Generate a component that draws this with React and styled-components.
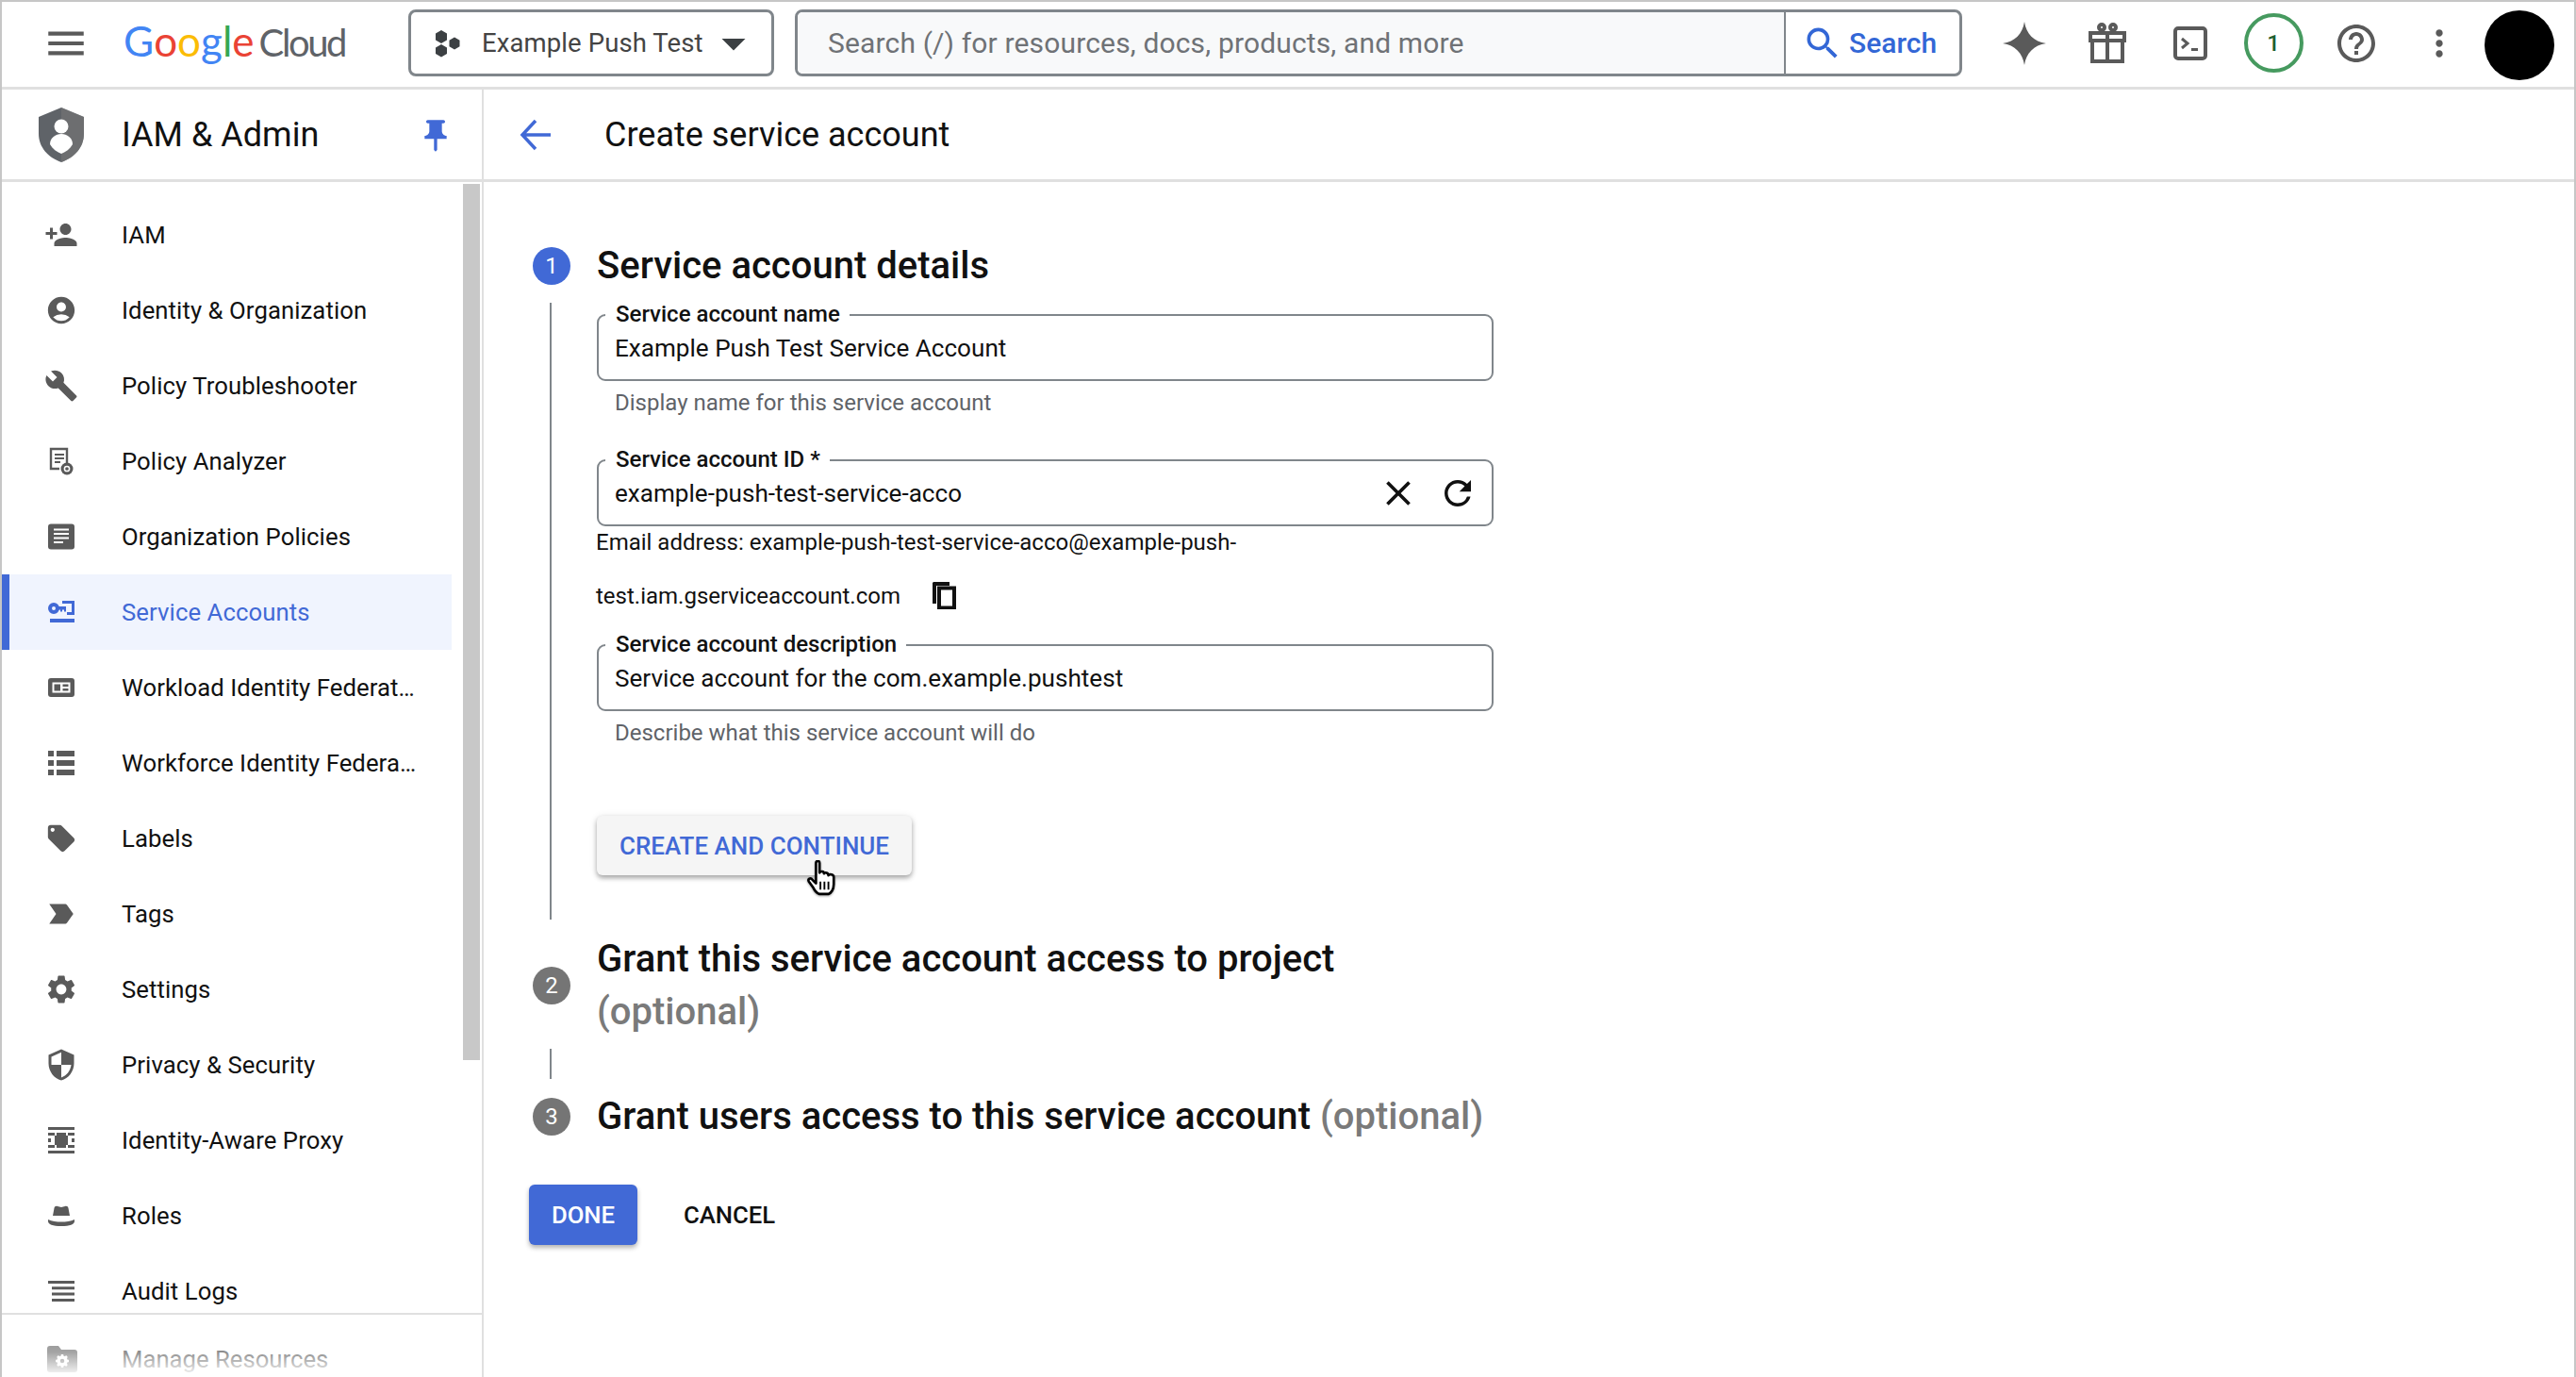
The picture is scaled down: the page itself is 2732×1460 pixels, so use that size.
import React from "react";
import styled, { createGlobalStyle } from "styled-components";
import {
  MdMenu, MdArrowDropDown, MdSearch, MdHelpOutline, MdMoreVert, MdPushPin,
  MdClose, MdRefresh, MdPersonAdd, MdAccountCircle, MdBuild, MdLocalOffer,
  MdLabelImportant, MdSettings, MdSecurity,
} from "react-icons/md";

const Global = createGlobalStyle`
  html, body { margin: 0; padding: 0; background: #fff; }
  body { font-family: Roboto, "Liberation Sans", sans-serif; color: #111; }
  #root { width: 2732px; height: 1460px; overflow: hidden; }
  * { box-sizing: border-box; }
`;

const Page = styled.div`
  width: 2732px; height: 1460px; overflow: hidden; display: flex; flex-direction: column;
  border: 2px solid #c6c6c6; border-bottom: none; background: #fff;
`;
const TopBar = styled.header`
  height: 93px; flex: none; display: flex; align-items: center; border-bottom: 3px solid #e0e0e0; padding-bottom: 3px;
`;
const MenuButton = styled.div`
  width: 129px; padding-left: 43px; flex: none; display: flex; align-items: center; color: #5a5a5a; font-size: 50px;
  svg { display: block; }
`;
const Logo = styled.div`
  width: 302px; flex: none; display: flex; align-items: baseline; font-family: Lato, sans-serif; font-size: 44px; letter-spacing: 0; color: #5f6368; padding-bottom: 6px;
`;
const LogoLetter = styled.span`color: ${(p) => p.$c};`;
const LogoWord = styled.span`font-size: 40px; margin-left: 5px; letter-spacing: -2.4px; color: #5f6368;`;
const ProjectPicker = styled.div`
  width: 388px; height: 71px; flex: none; display: flex; align-items: center; border: 3px solid #80868b; border-radius: 8px;
  padding-left: 24px; font-size: 27.5px; color: #444; margin-right: 22px;
`;
const ProjectName = styled.span`margin-left: 21px; white-space: nowrap; letter-spacing: .1px;`;
const ProjectCaret = styled.span`margin-left: 2px; display: flex; font-size: 60px; color: #3c4043;`;
const SearchBox = styled.div`
  width: 1238px; height: 71px; flex: none; display: flex; border: 3px solid #80868b; border-radius: 8px; overflow: hidden;
`;
const SearchInput = styled.div`
  flex: 1; background: #f8f9fa; padding-left: 32px; display: flex; align-items: center; font-size: 30px; letter-spacing: .15px; color: #6f7276; border-right: 2px solid #80868b;
`;
const SearchButton = styled.div`
  width: 184px; flex: none; display: flex; align-items: center; padding-left: 17px; gap: 6px; color: #3367d6; font-size: 30px; font-weight: 500; svg { font-size: 44px; }
`;
const IconRow = styled.div`margin-left: 22px; display: flex; align-items: center; flex: none;`;
const IconSlot = styled.div`
  width: 88px; display: flex; align-items: center; justify-content: center; color: #5a5a5a;
  svg { display: block; }
`;
const CountRing = styled.div`
  width: 63px; height: 63px; border-radius: 50%; border: 4px solid #469a5f; color: #1e5e2f; display: flex; align-items: center; justify-content: center; font-size: 24px; font-weight: 500;
`;
const Avatar = styled.div`width: 74px; height: 74px; flex: none; border-radius: 50%; background: #000; margin: 5px 0 0 4px;`;

const Body = styled.div`flex: 1; min-height: 0; display: flex;`;
const Sidebar = styled.aside`
  width: 511px; flex: none; border-right: 2.5px solid #e0e0e0; display: flex; flex-direction: column; position: relative; overflow: hidden;
`;
const SideHead = styled.div`
  height: 98px; flex: none; display: flex; align-items: center; border-bottom: 3px solid #e0e0e0; padding: 0 31px 0 39px;
`;
const SideTitle = styled.div`flex: 1; margin-left: 40px; font-size: 36px; color: #111; white-space: nowrap;`;
const PinIcon = styled.div`color: #4169d6; display: flex; font-size: 40px; margin: 2px -2px 0 0;`;
const NavWrap = styled.div`flex: 1; min-height: 0; position: relative; overflow: hidden;`;
const Nav = styled.nav`padding-top: 16px; width: 477px; display: flex; flex-direction: column;`;
const NavRow = styled.div`
  height: 80px; flex: none; display: flex; align-items: center;
  color: ${(p) => (p.$active ? "#4169d6" : "#111")};
  background: ${(p) => (p.$active ? "#f0f4fe" : "transparent")};
  border-left: 8px solid ${(p) => (p.$active ? "#4169d6" : "transparent")};
`;
const NavIcon = styled.span`
  width: 119px; padding-right: 9px; flex: none; display: flex; align-items: center; justify-content: center;
  color: ${(p) => (p.$active ? "#4169d6" : "#5a5a5a")};
  svg { display: block; }
`;
const NavText = styled.span`font-size: 25.7px; white-space: nowrap; letter-spacing: .08px;`;
const ScrollThumb = styled.div`
  position: absolute; top: 2px; left: 489px; width: 18px; height: 929px; background: #c8c8c8;
`;
const SideFoot = styled.div`
  position: absolute; left: 0; right: 0; bottom: 0; height: 68px; background: #fff; border-top: 2.500px solid #e0e0e0;
  display: flex; align-items: center; padding-top: 28px;
`;
const Fade = styled.div`position: absolute; inset: 0; background: linear-gradient(to bottom, rgba(255,255,255,.2), rgba(255,255,255,.45) 60%, #fff 100%);`;
const FootIcon = styled.span`width: 127px; padding-left: 48px; display: flex; color: #5a5a5a; svg { display: block; }`;
const FootText = styled.span`font-size: 25.7px; color: #333; white-space: nowrap;`;

const Main = styled.main`flex: 1; min-width: 0; display: flex; flex-direction: column;`;
const SubHead = styled.div`
  height: 98px; flex: none; display: flex; align-items: center; border-bottom: 3px solid #e0e0e0; padding-left: 38px;
`;
const BackIcon = styled.svg`width: 34px; height: 34px; margin-right: 56px; color: #4169d6;`;
const PageTitle = styled.h1`margin: 0; font-weight: 400; font-size: 36px; color: #111;`;
const Content = styled.div`padding: 61px 0 0 48px;`;
const StepHead = styled.div`
  display: flex; align-items: center; padding-left: 4px; margin-top: ${(p) => p.$mt || 0}px;
`;
const StepDot = styled.div`
  width: 40px; height: 40px; border-radius: 50%; flex: none; margin-right: 28px; display: flex; align-items: center; justify-content: center;
  color: #fff; font-size: 24px; background: ${(p) => (p.$on ? "#4169d6" : "#757575")};
`;
const StepTitle = styled.div`
  font-size: 40px; font-weight: 500; line-height: 56px; color: #111; width: ${(p) => p.$w || "auto"}; white-space: ${(p) => (p.$w ? "normal" : "nowrap")};
`;
const Optional = styled.span`color: #7a7a7a;`;
const StepBody = styled.div`
  margin-left: 22px; padding: 12px 0 47px 47px; border-left: 2px solid #80868b; margin-top: 11px; width: 1000px;
`;
const Rail = styled.div`margin-left: 22px; margin-top: 11px; width: 2px; height: 32px; background: #80868b;`;
const Field = styled.div`
  width: 951px; height: 71px; margin-left: 1px; border: 2.5px solid #80868b; border-radius: 9px; position: relative; display: flex; align-items: center; padding: 0 15px 0 17px;
  margin-top: ${(p) => p.$mt || 0}px;
`;
const FieldLabel = styled.label`
  position: absolute; left: 7px; top: -16px; background: #fff; padding: 0 10px 0 11px; font-size: 24px; font-weight: 500; line-height: 28px; color: #111; white-space: nowrap;
`;
const FieldValue = styled.span`flex: 1; font-size: 26.1px; color: #111; white-space: nowrap;`;
const FieldAction = styled.span`display: flex; color: #111; margin-left: ${(p) => p.$ml || 0}px;`;
const Hint = styled.div`
  padding-left: 20px; margin-top: 8px; height: 30px; line-height: 30px; font-size: 24px; color: #5f6368; margin-bottom: ${(p) => p.$mb || 0}px;
`;
const EmailLine = styled.div`
  display: flex; align-items: center; height: ${(p) => p.$h}px; margin-top: ${(p) => p.$mt || 0}px; font-size: 24px; color: #111; white-space: nowrap;
`;
const CopyIcon = styled.svg`display: block; width: 26px; height: 29px; margin-left: 33px; color: #111;`;
const RaisedButton = styled.button`
  display: block; width: 334px; height: 63px; margin: 73px 0 0 1px; border: 0; border-radius: 6px; background: #f5f5f5; color: #4169d6; font: 500 26px Roboto, sans-serif; position: relative; padding: 0;
  box-shadow: 0 3px 5px rgba(0,0,0,.3), 0 1px 8px rgba(0,0,0,.1);
`;
const CursorMark = styled.svg`position: absolute; left: 223px; top: 47px; width: 32px; height: 38px; filter: drop-shadow(0 1px 1px rgba(0,0,0,.35));`;
const Actions = styled.div`display: flex; align-items: center; margin-top: 44px;`;
const DoneButton = styled.button`
  width: 115px; height: 64px; border: 0; border-radius: 6px; background: #4169d6; color: #fff; font: 500 25.7px Roboto, sans-serif; padding: 0;
  box-shadow: 0 3px 5px rgba(0,0,0,.3);
`;
const CancelButton = styled.button`
  border: 0; background: none; color: #111; font: 500 25.7px Roboto, sans-serif; padding: 0; margin-left: 49px;
`;

const PolicyAnalyzer = () => (
  <svg width="28" height="30" viewBox="0 0 28 30" fill="none"><path d="M20 19V2H3v21h9" stroke="currentColor" strokeWidth="2.400" /><path d="M7 8h10M7 12h10M7 16h6" stroke="currentColor" strokeWidth="2" /><circle cx="20" cy="23" r="6.500" fill="currentColor" /><circle cx="20" cy="23" r="2.600" fill="none" stroke="#fff" strokeWidth="1.500" /></svg>
);
const OrgPolicy = () => (
  <svg width="28" height="28" viewBox="0 0 28 28"><rect width="28" height="27" y=".5" rx="3" fill="currentColor" /><path d="M6 6.500h16M6 11h16M6 15.500h16M6 20h10" stroke="#fff" strokeWidth="2" /></svg>
);
const ServiceKey = () => (
  <svg width="28" height="24" viewBox="0 0 28 24"><circle cx="6" cy="8" r="4" fill="none" stroke="currentColor" strokeWidth="4" /><path d="M10 6h9v5.500h-2V9.500h-2v2h-2v-2h-3z" fill="currentColor" /><path d="M15 0h13v15H20v-3h5V3H15zM2 19h26v4H2z" fill="currentColor" /></svg>
);
const Workload = () => (
  <svg width="28" height="20" viewBox="0 0 28 20"><rect width="28" height="20" rx="3" fill="currentColor" /><path d="M4.500 4.500h19v11h-19z" fill="#fff" /><path d="M6.500 6.500h6.500v7H6.500zM15.500 6.500h6v2.500h-6zM15.500 11h6v2.500h-6z" fill="currentColor" /></svg>
);
const WorkforceList = () => (
  <svg width="28" height="26" viewBox="0 0 28 26"><path d="M0 0h6v6H0zM9 0h19v6H9zM0 10h6v6H0zM9 10h19v6H9zM0 20h6v6H0zM9 20h19v6H9z" fill="currentColor" /></svg>
);
const Proxy = () => (
  <svg width="28" height="28" viewBox="0 0 28 28"><path d="M0 0h28v3H0zM0 25h28v3H0zM0 6h7v3H0zM21 6h7v3h-7zM0 19h7v3H0zM21 19h7v3h-7zM0 12h3v4H0zM25 12h3v4h-3zM9 6h10v3h2v10h-2v3H9v-3H7V9h2z" fill="currentColor" /></svg>
);
const Hat = () => (
  <svg width="28" height="22" viewBox="0 0 28 22"><path d="M5 11 6.500 3c.3-1.800 1.800-2.500 3.500-2l4 1 4-1c1.700-.5 3.200.2 3.500 2L23 11zM0 15c4 2 9 2.500 14 2.500S24 17 28 15v2c0 3-5 5-14 5S0 20 0 17z" fill="currentColor" /></svg>
);
const AuditLines = () => (
  <svg width="28" height="22" viewBox="0 0 28 22"><path d="M0 0h28v3H0zM4 6.300h24v3H4zM4 12.600h24v3H4zM4 19h24v3H4z" fill="currentColor" /></svg>
);
const FolderGear = () => (
  <svg width="32" height="28" viewBox="0 0 32 28"><path d="M0 3a3 3 0 0 1 3-3h9l3 4h14a3 3 0 0 1 3 3v18a3 3 0 0 1-3 3H3a3 3 0 0 1-3-3z" fill="currentColor" /><circle cx="16" cy="16" r="4" fill="none" stroke="#fff" strokeWidth="3.500" /><path d="M16 9v3M16 20v3M9 16h3M20 16h3M11 11l2 2M21 11l-2 2M11 21l2-2M21 21l-2-2" stroke="#fff" strokeWidth="2.500" /></svg>
);
const Hive = () => (
  <svg width="30" height="30" viewBox="0 0 30 30" fill="#3c4043"><path d="M8 1l6 3.500v7L8 15l-6-3.500v-7z" /><path d="M22 8.500l5.500 3.200v6.600L22 21.500l-5.500-3.200v-6.600z" /><path d="M8 16l6 3.500v6.500L8 29.500 2 26v-6.500z" /></svg>
);
const Spark = () => (
  <svg width="46" height="46" viewBox="0 0 46 46" fill="#5a5a5a"><path d="M23 0c2 13 10 21 23 23-13 2-21 10-23 23-2-13-10-21-23-23 13-2 21-10 23-23z" /></svg>
);
const Gift = () => (
  <svg width="40" height="43" viewBox="0 0 40 43" fill="none" stroke="#5a5a5a" strokeWidth="4"><path d="M4 19v22h32V19" /><rect x="2" y="11" width="36" height="8" /><path d="M20 11v30" /><circle cx="14" cy="5" r="3" /><circle cx="26" cy="5" r="3" /></svg>
);
const Terminal = () => (
  <svg width="36" height="36" viewBox="0 0 36 36"><rect x="2" y="2" width="32" height="32" rx="3" fill="none" stroke="#5a5a5a" strokeWidth="4" /><path d="M9 13l6 5-6 5" fill="none" stroke="#5a5a5a" strokeWidth="3" /><path d="M19 23h7v3h-7z" fill="#5a5a5a" /></svg>
);
const Shield = () => (
  <svg width="48" height="58" viewBox="0 0 48 58"><path d="M24 0 48 10v18c0 14-10 25-24 30C10 53 0 42 0 28V10z" fill="#5f6368" /><path d="M24 0 48 10v18c0 14-10 25-24 30z" fill="#777" opacity=".6" /><circle cx="24" cy="20" r="7.500" fill="#fff" /><path d="M12 39c0-7 6-11 12-11s12 4 12 11c-3 5-7 8-12 10-5-2-9-5-12-10z" fill="#fff" /></svg>
);
const Hand = () => (
  <CursorMark viewBox="0 0 34 40"><path d="M10 3c0-3 4-3 4 0v11c1-2 5-2 5 1 1-2 5-1 5 2 1-2 6-1 6 2v8c0 6-3 10-6 11H14c-3-1-5-3-7-7l-5-7c-2-3 2-5 4-2l4 4z" fill="#fff" stroke="#000" strokeWidth="2.800" strokeLinejoin="round" /><path d="M15 24v9M19.500 24v9M24 24v9" stroke="#000" strokeWidth="2" /></CursorMark>
);

const navItems = [
  ["IAM", <MdPersonAdd size={36} />],
  ["Identity & Organization", <MdAccountCircle size={34} />],
  ["Policy Troubleshooter", <MdBuild size={36} />],
  ["Policy Analyzer", <PolicyAnalyzer />],
  ["Organization Policies", <OrgPolicy />],
  ["Service Accounts", <ServiceKey />, true],
  ["Workload Identity Federat…", <Workload />],
  ["Workforce Identity Federa…", <WorkforceList />],
  ["Labels", <MdLocalOffer size={34} />],
  ["Tags", <MdLabelImportant size={36} />],
  ["Settings", <MdSettings size={36} />],
  ["Privacy & Security", <MdSecurity size={36} />],
  ["Identity-Aware Proxy", <Proxy />],
  ["Roles", <Hat />],
  ["Audit Logs", <AuditLines />],
];

const googleLetters = [["G", "#4285f4"], ["o", "#ea4335"], ["o", "#fbbc05"], ["g", "#4285f4"], ["l", "#34a853"], ["e", "#ea4335"]];

export default function App() {
  return (
    <Page>
      <Global />
      <TopBar>
        <MenuButton><MdMenu /></MenuButton>
        <Logo>
          {googleLetters.map(([l, c], i) => <LogoLetter key={i} $c={c}>{l}</LogoLetter>)}
          <LogoWord>Cloud</LogoWord>
        </Logo>
        <ProjectPicker>
          <Hive />
          <ProjectName>Example Push Test</ProjectName>
          <ProjectCaret><MdArrowDropDown /></ProjectCaret>
        </ProjectPicker>
        <SearchBox>
          <SearchInput>Search (/) for resources, docs, products, and more</SearchInput>
          <SearchButton><MdSearch />Search</SearchButton>
        </SearchBox>
        <IconRow>
          <IconSlot><Spark /></IconSlot>
          <IconSlot><Gift /></IconSlot>
          <IconSlot><Terminal /></IconSlot>
          <IconSlot><CountRing>1</CountRing></IconSlot>
          <IconSlot><MdHelpOutline size={48} /></IconSlot>
          <IconSlot><MdMoreVert size={44} /></IconSlot>
        </IconRow>
        <Avatar />
      </TopBar>
      <Body>
        <Sidebar>
          <SideHead>
            <Shield />
            <SideTitle>IAM &amp; Admin</SideTitle>
            <PinIcon><MdPushPin /></PinIcon>
          </SideHead>
          <NavWrap>
            <Nav>
              {navItems.map(([label, icon, active]) => (
                <NavRow key={label} $active={active}>
                  <NavIcon $active={active}>{icon}</NavIcon>
                  <NavText>{label}</NavText>
                </NavRow>
              ))}
            </Nav>
            <ScrollThumb />
          </NavWrap>
          <SideFoot>
            <FootIcon><FolderGear /></FootIcon>
            <FootText>Manage Resources</FootText>
            <Fade />
          </SideFoot>
        </Sidebar>
        <Main>
          <SubHead>
            <BackIcon viewBox="0 0 34 34" fill="none" stroke="currentColor" strokeWidth="3.500"><path d="M33 17H3M17 2 3 17l14 15" /></BackIcon>
            <PageTitle>Create service account</PageTitle>
          </SubHead>
          <Content>
            <StepHead>
              <StepDot $on>1</StepDot>
              <StepTitle>Service account details</StepTitle>
            </StepHead>
            <StepBody>
              <Field>
                <FieldLabel>Service account name</FieldLabel>
                <FieldValue>Example Push Test Service Account</FieldValue>
              </Field>
              <Hint $mb={45}>Display name for this service account</Hint>
              <Field>
                <FieldLabel>Service account ID *</FieldLabel>
                <FieldValue>example-push-test-service-acco</FieldValue>
                <FieldAction><MdClose size={44} /></FieldAction>
                <FieldAction $ml={20}><MdRefresh size={42} /></FieldAction>
              </Field>
              <EmailLine $h={34}>Email address: example-push-test-service-acco@example-push-</EmailLine>
              <EmailLine $h={57} $mt={11}>test.iam.gserviceaccount.com
                <CopyIcon viewBox="0 0 26 29"><path d="M2 0h17v4H5v19H1V1z" fill="currentColor" /><path d="M8 6.500h16v21H8z" fill="none" stroke="currentColor" strokeWidth="4" /></CopyIcon>
              </EmailLine>
              <Field $mt={23}>
                <FieldLabel>Service account description</FieldLabel>
                <FieldValue>Service account for the com.example.pushtest</FieldValue>
              </Field>
              <Hint>Describe what this service account will do</Hint>
              <RaisedButton>CREATE AND CONTINUE<Hand /></RaisedButton>
            </StepBody>
            <StepHead $mt={14}>
              <StepDot>2</StepDot>
              <StepTitle $w="900px">Grant this service account access to project <Optional>(optional)</Optional></StepTitle>
            </StepHead>
            <Rail />
            <StepHead $mt={12}>
              <StepDot>3</StepDot>
              <StepTitle>Grant users access to this service account <Optional>(optional)</Optional></StepTitle>
            </StepHead>
            <Actions>
              <DoneButton>DONE</DoneButton>
              <CancelButton>CANCEL</CancelButton>
            </Actions>
          </Content>
        </Main>
      </Body>
    </Page>
  );
}
